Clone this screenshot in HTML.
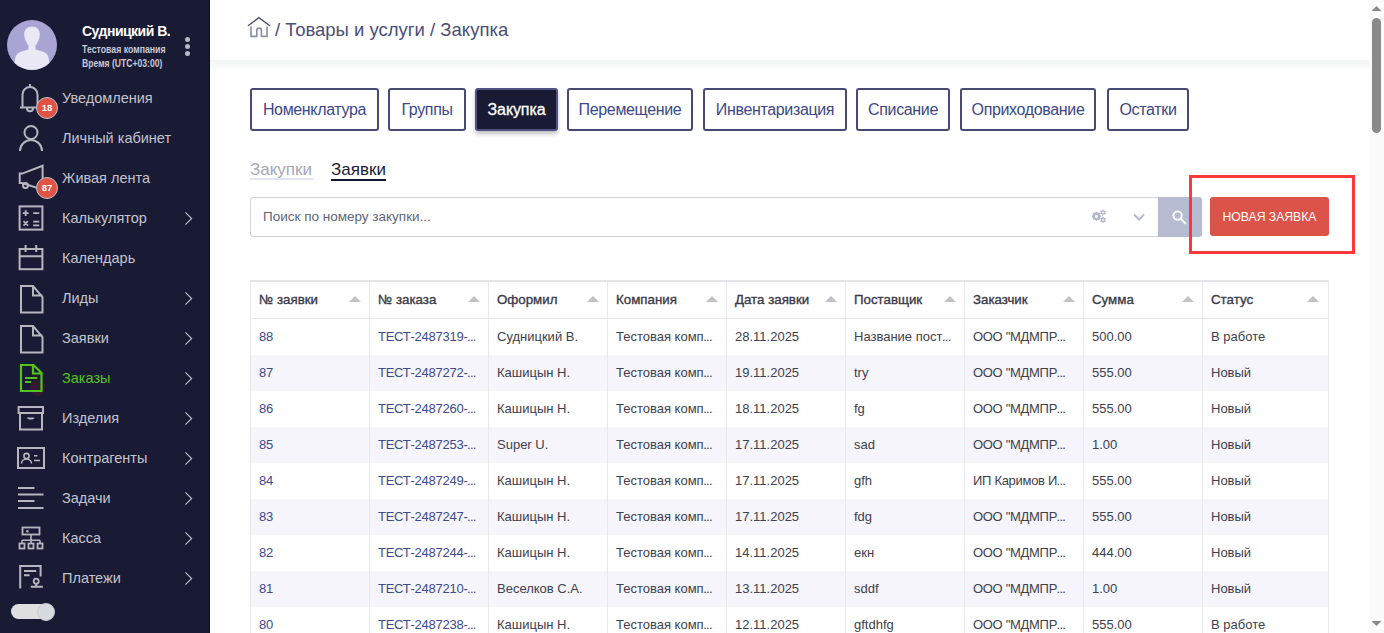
<!DOCTYPE html>
<html><head><meta charset="utf-8">
<style>
*{box-sizing:border-box;margin:0;padding:0}
html,body{width:1384px;height:633px;overflow:hidden;background:#fff;font-family:"Liberation Sans",sans-serif}
.abs{position:absolute}
#side{position:absolute;left:0;top:0;width:210px;height:633px;background:#191b35;border-right:1px solid #0d0f26}
.mi{position:absolute;left:62px;font-size:14.5px;color:#c3c4ce;white-space:nowrap;line-height:16px}
.ic{position:absolute;left:0;top:0}
.chev{position:absolute;left:184px}
.badge{position:absolute;width:22px;height:22px;border-radius:50%;background:#df5444;border:1.5px solid #c4c5cc;color:#fff;font-weight:bold;font-size:9.5px;line-height:20px;text-align:center}
#hdr{position:absolute;left:210px;top:0;width:1159px;height:60px;background:#fff}
#hdrsh{position:absolute;left:210px;top:60px;width:1159px;height:12px;background:linear-gradient(#f2f3f3,#fff)}
.tb{position:absolute;top:88px;height:43px;border:2px solid #474b74;border-radius:3px;color:#3c4888;font-size:16px;line-height:39px;letter-spacing:-0.35px;text-align:center;white-space:nowrap;background:#fff}
.tb.act{background:#191b35;color:#fff;-webkit-text-stroke:0.3px #fff;letter-spacing:-0.1px;border-color:#4f5282;box-shadow:0 3px 4px rgba(0,0,0,.25)}
.th{position:absolute;top:292px;font-size:13.3px;color:#3a3a48;white-space:nowrap;line-height:16px;-webkit-text-stroke:0.35px #3a3a48}
.td{position:absolute;font-size:13px;color:#40404d;white-space:nowrap;line-height:16px}
.td.ls{letter-spacing:-0.3px}
.td.lk{color:#3d4a8c;letter-spacing:-0.25px}
.el{letter-spacing:-0.7px;margin-left:-0.5px}
</style></head><body>
<div id="side">
  <!-- avatar -->
  <svg class="abs" style="left:7px;top:20px" width="50" height="50" viewBox="0 0 50 50">
    <defs><clipPath id="avc"><circle cx="25" cy="25" r="25"/></clipPath></defs>
    <circle cx="25" cy="25" r="25" fill="#a9a4d3"/>
    <g clip-path="url(#avc)" fill="#e9e8f4">
      <path d="M25 6.5C20.4 6.5 17.2 9.7 17.2 14.1C17.2 18.3 19 22.7 21.5 25.7V29.6C18.3 30.8 13.2 31.6 10.8 33.4C8.6 35.2 7.4 39 7.2 50H42.8C42.6 39 41.4 35.2 39.2 33.4C36.8 31.6 31.7 30.8 28.5 29.6V25.7C31 22.7 32.8 18.3 32.8 14.1C32.8 9.7 29.6 6.5 25 6.5Z"/>
    </g>
  </svg>
  <div class="abs" style="left:82px;top:23px;font-size:14px;font-weight:bold;color:#fff;white-space:nowrap;line-height:16px;letter-spacing:-0.5px">Судницкий В.</div>
  <div class="abs" style="left:82px;top:44px;font-size:10px;font-weight:bold;color:#c8c8d4;white-space:nowrap;line-height:12px;transform:scaleX(0.875);transform-origin:0 0">Тестовая компания</div>
  <div class="abs" style="left:82px;top:58px;font-size:10px;font-weight:bold;color:#c8c8d4;white-space:nowrap;line-height:12px;transform:scaleX(0.86);transform-origin:0 0">Время (UTC+03:00)</div>
  <div class="abs" style="left:185px;top:37px;width:5px;height:5px;border-radius:50%;background:#b9b9c6"></div>
  <div class="abs" style="left:185px;top:43.5px;width:5px;height:5px;border-radius:50%;background:#b9b9c6"></div>
  <div class="abs" style="left:185px;top:50.5px;width:5px;height:5px;border-radius:50%;background:#b9b9c6"></div>

  <svg class="ic" width="210" height="633" viewBox="0 0 210 633" fill="none" stroke="#b6b6c0" stroke-width="2">
    <!-- bell -->
    <path d="M30 84v3M22.5 107V94.5a7.5 7.5 0 0 1 15 0V107M20 107.5h20M27 108.5a3 2.8 0 0 0 6 0"/>
    <!-- person -->
    <circle cx="31" cy="132.5" r="6.5"/>
    <path d="M20 151a11 11 0 0 1 22 0"/>
    <!-- megaphone -->
    <path d="M19.7 173.6v9.4h2.5L42.6 189.6V165.8L22.2 173.6z"/>
    <circle cx="25.5" cy="185.5" r="2.5"/>
    <!-- calculator -->
    <rect x="19.6" y="206.4" width="22.8" height="23.2"/>
    <path d="M22.8 213.2h5.8M25.7 210.3v5.8M33.2 213.2h6M23.5 221.2l4.4 4.4M27.9 221.2l-4.4 4.4M33.2 221.6h6M33.2 225.3h6" stroke-width="1.8"/>
    <!-- calendar -->
    <rect x="19.6" y="249" width="22.8" height="20.2"/>
    <path d="M19.6 256.3h22.8M25.6 245v7M36.2 245v7"/>
    <!-- doc Лиды -->
    <path d="M21 286h12l9.5 11v15.5H21z M33 286v9.5h9.5"/>
    <!-- doc Заявки -->
    <path d="M21 326h12l9.5 11v15.5H21z M33 326v9.5h9.5"/>
    <!-- archive -->
    <rect x="18.6" y="407" width="24.4" height="6"/>
    <path d="M20 413v16.6h22V413"/>
    <path d="M27 417.5h7.5a3.8 2.5 0 0 1-7.5 0z" fill="#b6b6c0" stroke="none"/>
    <!-- card -->
    <rect x="18" y="448" width="26" height="20"/>
    <circle cx="26.5" cy="456" r="2.6" stroke-width="1.6"/>
    <path d="M21.5 463.5a5 4.5 0 0 1 10 0M34 455.7h3.5M34 460.5h6" stroke-width="1.6"/>
    <!-- tasks -->
    <path d="M18 488h16.5M18 494.5h25.5M18 501h16.5M18 508h25.5"/>
    <!-- kassa -->
    <rect x="22.5" y="527.5" width="17" height="7" stroke-width="1.8"/>
    <path d="M26.2 531.3h2.4M27.4 530.1v2.4M31 535v5.2M22 540.2h18M22 540.2v3.2M31 540.2v3.2M40 540.2v3.2" stroke-width="1.6"/>
    <rect x="19.5" y="543.5" width="5" height="5" stroke-width="1.8"/>
    <rect x="28.5" y="543.5" width="5" height="5" stroke-width="1.8"/>
    <rect x="37.5" y="543.5" width="5" height="5" stroke-width="1.8"/>
    <!-- payments -->
    <path d="M20.2 588.5V566h20.4v10.4M24 571h12.2M24 575.2h5.6M30.8 586.8h12M36.2 583.6v3"/>
    <circle cx="36.2" cy="581.2" r="2.5" stroke-width="1.8"/>
    <!-- chevrons -->
    <g stroke-width="1.15" stroke="#bdbdc6"><path d="M185.5 212.4l6.1 6.1-6.1 6.1"/><path d="M185.5 292.4l6.1 6.1-6.1 6.1"/><path d="M185.5 332.4l6.1 6.1-6.1 6.1"/><path d="M185.5 372.4l6.1 6.1-6.1 6.1"/><path d="M185.5 412.4l6.1 6.1-6.1 6.1"/><path d="M185.5 452.4l6.1 6.1-6.1 6.1"/><path d="M185.5 492.4l6.1 6.1-6.1 6.1"/><path d="M185.5 532.4l6.1 6.1-6.1 6.1"/><path d="M185.5 572.4l6.1 6.1-6.1 6.1"/></g>
    <!-- orders doc green -->
    <circle cx="37.5" cy="388" r="8" fill="rgba(120,20,40,.28)" stroke="none"/>
    <g stroke="#53c31b" stroke-width="2.2">
      <path d="M21 365h12.5l8 8v18H21z M33 365v8.5h8.5"/>
      <path d="M25 378h12.3M25 382h6"/>
    </g>
  </svg>
  <div class="badge" style="left:36px;top:97px">18</div>
  <div class="badge" style="left:36px;top:177px">87</div>

  <div class="mi" style="top:90px">Уведомления</div>
  <div class="mi" style="top:130px">Личный кабинет</div>
  <div class="mi" style="top:170px">Живая лента</div>
  <div class="mi" style="top:210px">Калькулятор</div>
  <div class="mi" style="top:250px">Календарь</div>
  <div class="mi" style="top:290px">Лиды</div>
  <div class="mi" style="top:330px">Заявки</div>
  <div class="mi" style="top:370px;color:#53c31b">Заказы</div>
  <div class="mi" style="top:410px">Изделия</div>
  <div class="mi" style="top:450px">Контрагенты</div>
  <div class="mi" style="top:490px">Задачи</div>
  <div class="mi" style="top:530px">Касса</div>
  <div class="mi" style="top:570px">Платежи</div>

  <div class="abs" style="left:11px;top:604px;width:40px;height:15px;border-radius:8px;background:#dfdfdf"></div>
  <div class="abs" style="left:37px;top:603px;width:18px;height:18px;border-radius:50%;background:#d9dade;border:1px solid #c8c9cf"></div>
</div>

<div id="hdrsh"></div>
<div id="hdr">
  <svg class="abs" style="left:37px;top:16px" width="24" height="22" viewBox="0 0 24 22" fill="none" stroke-linecap="round">
    <path d="M4 10.4V20.4H9.8V14.4a2.3 2.3 0 0 1 4.6 0V20.4H20V10.4" stroke="#8a8ca8" stroke-width="1.6" stroke-linecap="butt"/>
    <path d="M1.4 9.5L11.9 1.6 22.5 9.5" stroke="#4b4e74" stroke-width="1.4"/>
  </svg>
  <div class="abs" style="left:65px;top:19px;font-size:18.5px;color:#4a4e78;white-space:nowrap;line-height:21px">/ Товары и услуги / Закупка</div>
</div>

<div class="tb" style="left:250px;width:129px">Номенклатура</div>
<div class="tb" style="left:388px;width:78px">Группы</div>
<div class="tb act" style="left:475px;width:83px">Закупка</div>
<div class="tb" style="left:567px;width:126px">Перемещение</div>
<div class="tb" style="left:703px;width:144px">Инвентаризация</div>
<div class="tb" style="left:856px;width:94px">Списание</div>
<div class="tb" style="left:960px;width:136px">Оприходование</div>
<div class="tb" style="left:1107px;width:82px">Остатки</div>

<div class="abs" style="left:250px;top:160px;font-size:17px;color:#a5a7b7;line-height:19px;white-space:nowrap">Закупки</div>
<div class="abs" style="left:250px;top:178px;width:63px;height:2px;background:#e3e5ee"></div>
<div class="abs" style="left:331px;top:160px;font-size:17px;color:#191b35;line-height:19px;white-space:nowrap">Заявки</div>
<div class="abs" style="left:331px;top:179px;width:55px;height:2px;background:#141533"></div>

<!-- search -->
<div class="abs" style="left:250px;top:197px;width:910px;height:40px;border:1px solid #d1d2d6;border-right:none;border-radius:4px 0 0 4px"></div>
<div class="abs" style="left:263px;top:209px;font-size:13.5px;color:#60657a;line-height:16px;white-space:nowrap">Поиск по номеру закупки...</div>
<svg class="abs" style="left:1088px;top:206px" width="24" height="20" viewBox="0 0 24 20" fill="none" stroke="#b1b4ce">
  <circle cx="8.4" cy="10.3" r="2.6" stroke-width="2.2"/>
  <g stroke-width="1.6"><path d="M8.4 10.3m0 -3.2v-1.4" transform="rotate(0 8.4 10.3)"/><path d="M8.4 10.3m0 -3.2v-1.4" transform="rotate(45 8.4 10.3)"/><path d="M8.4 10.3m0 -3.2v-1.4" transform="rotate(90 8.4 10.3)"/><path d="M8.4 10.3m0 -3.2v-1.4" transform="rotate(135 8.4 10.3)"/><path d="M8.4 10.3m0 -3.2v-1.4" transform="rotate(180 8.4 10.3)"/><path d="M8.4 10.3m0 -3.2v-1.4" transform="rotate(225 8.4 10.3)"/><path d="M8.4 10.3m0 -3.2v-1.4" transform="rotate(270 8.4 10.3)"/><path d="M8.4 10.3m0 -3.2v-1.4" transform="rotate(315 8.4 10.3)"/></g>
  <circle cx="15" cy="6.5" r="1.6" stroke-width="1.4"/>
  <g stroke-width="1.1"><path d="M15 6.5m0 -2.1v-1" transform="rotate(0 15 6.5)"/><path d="M15 6.5m0 -2.1v-1" transform="rotate(60 15 6.5)"/><path d="M15 6.5m0 -2.1v-1" transform="rotate(120 15 6.5)"/><path d="M15 6.5m0 -2.1v-1" transform="rotate(180 15 6.5)"/><path d="M15 6.5m0 -2.1v-1" transform="rotate(240 15 6.5)"/><path d="M15 6.5m0 -2.1v-1" transform="rotate(300 15 6.5)"/></g>
  <circle cx="15" cy="13.9" r="1.6" stroke-width="1.4"/>
  <g stroke-width="1.1"><path d="M15 13.9m0 -2.1v-1" transform="rotate(0 15 13.9)"/><path d="M15 13.9m0 -2.1v-1" transform="rotate(60 15 13.9)"/><path d="M15 13.9m0 -2.1v-1" transform="rotate(120 15 13.9)"/><path d="M15 13.9m0 -2.1v-1" transform="rotate(180 15 13.9)"/><path d="M15 13.9m0 -2.1v-1" transform="rotate(240 15 13.9)"/><path d="M15 13.9m0 -2.1v-1" transform="rotate(300 15 13.9)"/></g>
</svg>
<svg class="abs" style="left:1133px;top:213px" width="12" height="8" viewBox="0 0 12 8" fill="none" stroke="#b4b8ce" stroke-width="2">
  <path d="M1 1.5l5 5 5-5"/>
</svg>
<div class="abs" style="left:1158px;top:197px;width:44px;height:40px;background:#b8bcd3;border-radius:0 3px 3px 0"></div>
<svg class="abs" style="left:1171px;top:208px" width="18" height="18" viewBox="0 0 18 18" fill="none" stroke="#fff" stroke-width="1.9">
  <circle cx="6.6" cy="7.6" r="4.2"/>
  <path d="M9.6 10.6l5.2 5.2"/>
</svg>
<div class="abs" style="left:1210px;top:197px;width:119px;height:39px;background:#dc5349;border-radius:3px;color:#fff;font-size:12.2px;line-height:41px;text-align:center;white-space:nowrap">НОВАЯ ЗАЯВКА</div>
<div class="abs" style="left:1189px;top:175px;width:166px;height:79px;border:3px solid #fa3a3a"></div>

<!-- table -->
<!--TABLE-->
<div class="abs" style="left:251px;top:319px;width:1077px;height:36px;background:#fff"></div>
<div class="abs" style="left:251px;top:355px;width:1077px;height:36px;background:#f5f5fb"></div>
<div class="abs" style="left:251px;top:391px;width:1077px;height:36px;background:#fff"></div>
<div class="abs" style="left:251px;top:427px;width:1077px;height:36px;background:#f5f5fb"></div>
<div class="abs" style="left:251px;top:463px;width:1077px;height:36px;background:#fff"></div>
<div class="abs" style="left:251px;top:499px;width:1077px;height:36px;background:#f5f5fb"></div>
<div class="abs" style="left:251px;top:535px;width:1077px;height:36px;background:#fff"></div>
<div class="abs" style="left:251px;top:571px;width:1077px;height:36px;background:#f5f5fb"></div>
<div class="abs" style="left:251px;top:607px;width:1077px;height:36px;background:#fff"></div>
<div class="abs" style="left:250px;top:280px;width:1079px;height:2px;background:#e3e5e9"></div>
<div class="abs" style="left:250px;top:318px;width:1079px;height:1px;background:#e6e6ea"></div>
<div class="abs" style="left:250px;top:282px;width:1px;height:351px;background:#e9e9ed"></div>
<div class="abs" style="left:369px;top:282px;width:1px;height:351px;background:#e9e9ed"></div>
<div class="abs" style="left:488px;top:282px;width:1px;height:351px;background:#e9e9ed"></div>
<div class="abs" style="left:607px;top:282px;width:1px;height:351px;background:#e9e9ed"></div>
<div class="abs" style="left:726px;top:282px;width:1px;height:351px;background:#e9e9ed"></div>
<div class="abs" style="left:845px;top:282px;width:1px;height:351px;background:#e9e9ed"></div>
<div class="abs" style="left:964px;top:282px;width:1px;height:351px;background:#e9e9ed"></div>
<div class="abs" style="left:1083px;top:282px;width:1px;height:351px;background:#e9e9ed"></div>
<div class="abs" style="left:1202px;top:282px;width:1px;height:351px;background:#e9e9ed"></div>
<div class="abs" style="left:1328px;top:282px;width:1px;height:351px;background:#e9e9ed"></div>
<div class="th" style="left:259px">№ заявки</div>
<svg class="abs" style="left:349px;top:296px" width="12" height="6" viewBox="0 0 12 6"><path d="M0 6L6 0l6 6z" fill="#c2c2c6"/></svg>
<div class="th" style="left:378px">№ заказа</div>
<svg class="abs" style="left:468px;top:296px" width="12" height="6" viewBox="0 0 12 6"><path d="M0 6L6 0l6 6z" fill="#c2c2c6"/></svg>
<div class="th" style="left:497px">Оформил</div>
<svg class="abs" style="left:587px;top:296px" width="12" height="6" viewBox="0 0 12 6"><path d="M0 6L6 0l6 6z" fill="#c2c2c6"/></svg>
<div class="th" style="left:616px">Компания</div>
<svg class="abs" style="left:706px;top:296px" width="12" height="6" viewBox="0 0 12 6"><path d="M0 6L6 0l6 6z" fill="#c2c2c6"/></svg>
<div class="th" style="left:735px">Дата заявки</div>
<svg class="abs" style="left:825px;top:296px" width="12" height="6" viewBox="0 0 12 6"><path d="M0 6L6 0l6 6z" fill="#c2c2c6"/></svg>
<div class="th" style="left:854px">Поставщик</div>
<svg class="abs" style="left:944px;top:296px" width="12" height="6" viewBox="0 0 12 6"><path d="M0 6L6 0l6 6z" fill="#c2c2c6"/></svg>
<div class="th" style="left:973px">Заказчик</div>
<svg class="abs" style="left:1063px;top:296px" width="12" height="6" viewBox="0 0 12 6"><path d="M0 6L6 0l6 6z" fill="#c2c2c6"/></svg>
<div class="th" style="left:1092px">Сумма</div>
<svg class="abs" style="left:1182px;top:296px" width="12" height="6" viewBox="0 0 12 6"><path d="M0 6L6 0l6 6z" fill="#c2c2c6"/></svg>
<div class="th" style="left:1211px">Статус</div>
<svg class="abs" style="left:1307px;top:296px" width="12" height="6" viewBox="0 0 12 6"><path d="M0 6L6 0l6 6z" fill="#c2c2c6"/></svg>
<div class="td lk" style="left:259px;top:329px">88</div>
<div class="td lk" style="left:378px;top:329px">ТЕСТ-2487319-<span class="el">...</span></div>
<div class="td" style="left:497px;top:329px">Судницкий В.</div>
<div class="td" style="left:616px;top:329px">Тестовая комп<span class="el">...</span></div>
<div class="td" style="left:735px;top:329px">28.11.2025</div>
<div class="td" style="left:854px;top:329px">Название пост<span class="el">...</span></div>
<div class="td ls" style="left:973px;top:329px">ООО "МДМПР<span class="el">...</span></div>
<div class="td" style="left:1092px;top:329px">500.00</div>
<div class="td" style="left:1211px;top:329px">В работе</div>
<div class="td lk" style="left:259px;top:365px">87</div>
<div class="td lk" style="left:378px;top:365px">ТЕСТ-2487272-<span class="el">...</span></div>
<div class="td" style="left:497px;top:365px">Кашицын Н.</div>
<div class="td" style="left:616px;top:365px">Тестовая комп<span class="el">...</span></div>
<div class="td" style="left:735px;top:365px">19.11.2025</div>
<div class="td" style="left:854px;top:365px">try</div>
<div class="td ls" style="left:973px;top:365px">ООО "МДМПР<span class="el">...</span></div>
<div class="td" style="left:1092px;top:365px">555.00</div>
<div class="td" style="left:1211px;top:365px">Новый</div>
<div class="td lk" style="left:259px;top:401px">86</div>
<div class="td lk" style="left:378px;top:401px">ТЕСТ-2487260-<span class="el">...</span></div>
<div class="td" style="left:497px;top:401px">Кашицын Н.</div>
<div class="td" style="left:616px;top:401px">Тестовая комп<span class="el">...</span></div>
<div class="td" style="left:735px;top:401px">18.11.2025</div>
<div class="td" style="left:854px;top:401px">fg</div>
<div class="td ls" style="left:973px;top:401px">ООО "МДМПР<span class="el">...</span></div>
<div class="td" style="left:1092px;top:401px">555.00</div>
<div class="td" style="left:1211px;top:401px">Новый</div>
<div class="td lk" style="left:259px;top:437px">85</div>
<div class="td lk" style="left:378px;top:437px">ТЕСТ-2487253-<span class="el">...</span></div>
<div class="td" style="left:497px;top:437px">Super U.</div>
<div class="td" style="left:616px;top:437px">Тестовая комп<span class="el">...</span></div>
<div class="td" style="left:735px;top:437px">17.11.2025</div>
<div class="td" style="left:854px;top:437px">sad</div>
<div class="td ls" style="left:973px;top:437px">ООО "МДМПР<span class="el">...</span></div>
<div class="td" style="left:1092px;top:437px">1.00</div>
<div class="td" style="left:1211px;top:437px">Новый</div>
<div class="td lk" style="left:259px;top:473px">84</div>
<div class="td lk" style="left:378px;top:473px">ТЕСТ-2487249-<span class="el">...</span></div>
<div class="td" style="left:497px;top:473px">Кашицын Н.</div>
<div class="td" style="left:616px;top:473px">Тестовая комп<span class="el">...</span></div>
<div class="td" style="left:735px;top:473px">17.11.2025</div>
<div class="td" style="left:854px;top:473px">gfh</div>
<div class="td ls" style="left:973px;top:473px">ИП Каримов И<span class="el">...</span></div>
<div class="td" style="left:1092px;top:473px">555.00</div>
<div class="td" style="left:1211px;top:473px">Новый</div>
<div class="td lk" style="left:259px;top:509px">83</div>
<div class="td lk" style="left:378px;top:509px">ТЕСТ-2487247-<span class="el">...</span></div>
<div class="td" style="left:497px;top:509px">Кашицын Н.</div>
<div class="td" style="left:616px;top:509px">Тестовая комп<span class="el">...</span></div>
<div class="td" style="left:735px;top:509px">17.11.2025</div>
<div class="td" style="left:854px;top:509px">fdg</div>
<div class="td ls" style="left:973px;top:509px">ООО "МДМПР<span class="el">...</span></div>
<div class="td" style="left:1092px;top:509px">555.00</div>
<div class="td" style="left:1211px;top:509px">Новый</div>
<div class="td lk" style="left:259px;top:545px">82</div>
<div class="td lk" style="left:378px;top:545px">ТЕСТ-2487244-<span class="el">...</span></div>
<div class="td" style="left:497px;top:545px">Кашицын Н.</div>
<div class="td" style="left:616px;top:545px">Тестовая комп<span class="el">...</span></div>
<div class="td" style="left:735px;top:545px">14.11.2025</div>
<div class="td" style="left:854px;top:545px">екн</div>
<div class="td ls" style="left:973px;top:545px">ООО "МДМПР<span class="el">...</span></div>
<div class="td" style="left:1092px;top:545px">444.00</div>
<div class="td" style="left:1211px;top:545px">Новый</div>
<div class="td lk" style="left:259px;top:581px">81</div>
<div class="td lk" style="left:378px;top:581px">ТЕСТ-2487210-<span class="el">...</span></div>
<div class="td" style="left:497px;top:581px">Веселков С.А.</div>
<div class="td" style="left:616px;top:581px">Тестовая комп<span class="el">...</span></div>
<div class="td" style="left:735px;top:581px">13.11.2025</div>
<div class="td" style="left:854px;top:581px">sddf</div>
<div class="td ls" style="left:973px;top:581px">ООО "МДМПР<span class="el">...</span></div>
<div class="td" style="left:1092px;top:581px">1.00</div>
<div class="td" style="left:1211px;top:581px">Новый</div>
<div class="td lk" style="left:259px;top:617px">80</div>
<div class="td lk" style="left:378px;top:617px">ТЕСТ-2487238-<span class="el">...</span></div>
<div class="td" style="left:497px;top:617px">Кашицын Н.</div>
<div class="td" style="left:616px;top:617px">Тестовая комп<span class="el">...</span></div>
<div class="td" style="left:735px;top:617px">12.11.2025</div>
<div class="td" style="left:854px;top:617px">gftdhfg</div>
<div class="td ls" style="left:973px;top:617px">ООО "МДМПР<span class="el">...</span></div>
<div class="td" style="left:1092px;top:617px">555.00</div>
<div class="td" style="left:1211px;top:617px">В работе</div>
<!--/TABLE-->

<!-- scrollbar -->
<div class="abs" style="left:1369px;top:0;width:15px;height:633px;background:#fbfbfb"></div>
<div class="abs" style="left:1372px;top:18px;width:9px;height:115px;border-radius:4.5px;background:#8a8a8a"></div>
<svg class="abs" style="left:1369px;top:0" width="15" height="633" viewBox="0 0 15 633">
  <path d="M2.5 11L7.5 6l5 5z" fill="#8a8a8a"/>
  <path d="M2.5 621l5 5 5-5z" fill="#8a8a8a"/>
</svg>
</body></html>
